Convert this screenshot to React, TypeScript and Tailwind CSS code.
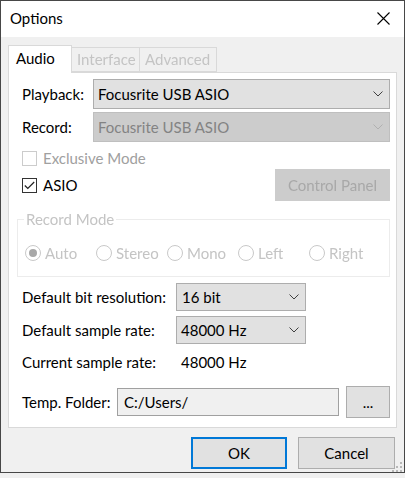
import React from 'react';

const font = "font-['Lato',sans-serif]";

const Chevron = ({ disabled }: { disabled?: boolean }) => (
  <svg width="10" height="6" viewBox="0 0 10 6" className={disabled ? 'text-[#b0b0b0]' : 'text-[#404040]'}>
    <polyline points="0.5,0.5 5,5 9.5,0.5" fill="none" stroke="currentColor" strokeWidth="1" />
  </svg>
);

interface ComboProps {
  value: string;
  className: string;
  disabled?: boolean;
}

const Combo: React.FC<ComboProps> = ({ value, className, disabled }) => (
  <div
    className={`flex items-center justify-between pl-[4px] pr-[6px] border ${
      disabled ? 'bg-[#cccccc] border-[#bfbfbf] text-[#838383]' : 'bg-[#e1e1e1] border-[#adadad] text-black'
    } ${className}`}
  >
    <span>{value}</span>
    <Chevron disabled={disabled} />
  </div>
);

const Radio = ({ label, checked }: { label: string; checked?: boolean }) => (
  <div className="flex items-center gap-[4px]">
    <span className="w-[16px] h-[16px] rounded-full border border-[#c8c8c8] bg-white flex items-center justify-center">
      {checked && <span className="w-[8px] h-[8px] rounded-full bg-[#a8a8a8]" />}
    </span>
    <span>{label}</span>
  </div>
);

export default function App() {
  return (
    <div className={`w-[405px] h-[478px] bg-[#f0f0f0] text-[15px] leading-[18px] whitespace-nowrap ${font}`}>
      <div className="h-[473px] border border-[#474747] flex flex-col bg-[#f0f0f0]">
        {/* Title bar */}
        <div className="h-[36px] bg-white flex items-center justify-between pl-[9px] pr-[14px] shrink-0">
          <span className="text-black -mt-[2px]">Options</span>
          <svg width="13" height="13" viewBox="0 0 13 13" className="text-black -mt-[1px]">
            <path d="M0.5 0.5 L12.5 12.5 M12.5 0.5 L0.5 12.5" stroke="currentColor" strokeWidth="1.1" />
          </svg>
        </div>

        <div className="px-[7px] pt-[8px]">
          {/* Tabs */}
          <div className="flex items-end h-[27px]">
            <div className="w-[64px] h-[28px] -mb-px bg-white border border-b-0 border-[#d9d9d9] pl-[7px] pt-[3px] relative z-10">
              Audio
            </div>
            <div className="flex items-end blur-[0.6px] text-[#c4c4c4]">
              <div className="w-[68px] h-[25px] border border-[#d9d9d9] border-l-0 pl-[5px] pt-[2px]">Interface</div>
              <div className="w-[77px] h-[25px] border border-[#d9d9d9] border-l-0 pl-[5px] pt-[2px]">Advanced</div>
            </div>
          </div>

          {/* Panel */}
          <div className="h-[356px] bg-white border border-[#d9d9d9] pl-[13px] pr-[6px] pt-[6px]">
            <div className="flex items-center h-[30px]">
              <span className="w-[71px] shrink-0">Playback:</span>
              <Combo value="Focusrite USB ASIO" className="flex-1 h-[30px]" />
            </div>
            <div className="flex items-center h-[30px] mt-[3px]">
              <span className="w-[71px] shrink-0">Record:</span>
              <Combo value="Focusrite USB ASIO" className="flex-1 h-[30px]" disabled />
            </div>

            <div className="flex items-center h-[16px] mt-[8px] gap-[6px] text-[#a0a0a0]">
              <span className="w-[15px] h-[15px] border border-[#cccccc] bg-white" />
              <span>Exclusive Mode</span>
            </div>

            <div className="flex items-start justify-between h-[32px] mt-[3px]">
              <div className="flex items-center gap-[6px] mt-[7px]">
                <span className="w-[15px] h-[15px] border border-[#333333] bg-white flex items-center justify-center">
                  <svg width="11" height="9" viewBox="0 0 11 9">
                    <polyline points="0.8,4.5 3.8,7.5 10.2,1" fill="none" stroke="#222" strokeWidth="1.2" />
                  </svg>
                </span>
                <span>ASIO</span>
              </div>
              <div className="w-[115px] h-[32px] bg-[#cccccc] flex items-center justify-center">
                <span className="blur-[0.6px] text-[#a8a8a8]">Control Panel</span>
              </div>
            </div>

            {/* Record Mode group */}
            <fieldset className="mt-[10px] -ml-[5px] h-[66px] border border-[#ececec] pl-[6px] blur-[0.6px] text-[#c4c4c4]">
              <legend className="px-[2px] leading-[16px]">Record Mode</legend>
              <div className="grid grid-cols-5 w-[355px] mt-[17px] ml-[1px]">
                <Radio label="Auto" checked />
                <Radio label="Stereo" />
                <Radio label="Mono" />
                <Radio label="Left" />
                <Radio label="Right" />
              </div>
            </fieldset>

            <div className="flex items-center h-[28px] mt-[6px]">
              <span className="w-[154px] shrink-0">Default bit resolution:</span>
              <Combo value="16 bit" className="w-[130px] h-[28px] pl-[5px]" />
            </div>
            <div className="flex items-center h-[28px] mt-[5px]">
              <span className="w-[154px] shrink-0">Default sample rate:</span>
              <Combo value="48000 Hz" className="w-[130px] h-[28px]" />
            </div>

            <div className="flex items-center h-[20px] mt-[8px]">
              <span className="w-[159px] shrink-0">Current sample rate:</span>
              <span>48000 Hz</span>
            </div>

            <div className="flex items-center h-[32px] mt-[14px]">
              <span className="w-[95px] shrink-0">Temp. Folder:</span>
              <div className="w-[222px] shrink-0 h-[28px] border border-[#a0a0a0] bg-[#f0f0f0] flex items-center pl-[6px]">
                C:/Users/
              </div>
              <div className="ml-auto w-[44px] h-[32px] bg-[#e1e1e1] border border-[#adadad] flex items-center justify-center">
                ...
              </div>
            </div>
          </div>
        </div>

        {/* Buttons */}
        <div className="flex justify-end gap-[11px] pr-[9px] mt-[9px] relative">
          <button className="w-[96px] h-[32px] bg-[#e1e1e1] border-2 border-[#0078d7] text-black">OK</button>
          <button className="w-[97px] h-[32px] bg-[#e1e1e1] border border-[#adadad] text-black">Cancel</button>
          <svg width="12" height="12" viewBox="0 0 12 12" className="absolute right-[1px] top-[25px]">
            <rect x="9" y="0" width="2" height="2" fill="#b8b8b8" />
            <rect x="5" y="4" width="2" height="2" fill="#b8b8b8" />
            <rect x="9" y="4" width="2" height="2" fill="#b8b8b8" />
            <rect x="1" y="8" width="2" height="2" fill="#b8b8b8" />
            <rect x="5" y="8" width="2" height="2" fill="#b8b8b8" />
            <rect x="9" y="8" width="2" height="2" fill="#b8b8b8" />
          </svg>
        </div>
      </div>
    </div>
  );
}
